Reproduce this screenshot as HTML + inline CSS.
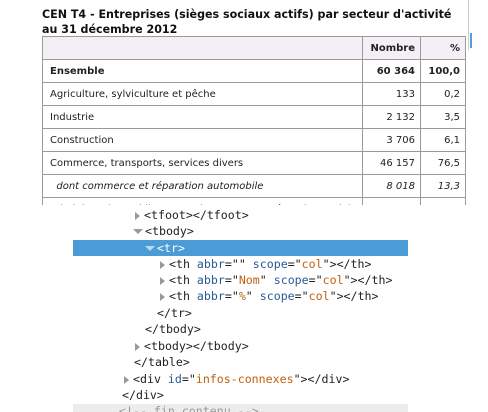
<!DOCTYPE html>
<html><head><meta charset="utf-8"><style>
*{margin:0;padding:0;box-sizing:border-box}
body{width:488px;height:412px;background:#fff;position:relative;overflow:hidden;font-family:"DejaVu Sans","Liberation Sans",sans-serif}
.title{position:absolute;left:42px;top:7px;font-size:11.1px;font-weight:bold;color:#111;line-height:15px;white-space:nowrap}
.clip{position:absolute;left:0;top:0;width:488px;height:205px;overflow:hidden}
table{position:absolute;left:42px;top:36px;width:423px;border-collapse:collapse;table-layout:fixed;font-size:10px;color:#222}
td,th{border:1px solid #9a9a9a;height:23px;padding:0 5px 0 7px;white-space:nowrap;overflow:hidden}
thead th{background:#f4eff6;font-weight:bold;text-align:right}
td.n{text-align:right}
.b td{font-weight:bold}
.i td{font-style:italic}
.vline{position:absolute;left:468px;top:0;width:1px;height:50px;background:#ccc}
.blue{position:absolute;left:470px;top:33px;width:2px;height:15px;background:#5b9bd5}
.dev{position:absolute;left:73px;top:205px;width:335px;height:207px;background:#fff;font-family:"DejaVu Sans Mono","Liberation Mono",monospace;font-size:11.6px;color:#222}
.l{position:absolute;left:0;width:335px;height:16px;line-height:16px;white-space:pre}
.hl{background:#4a9bd6;color:#fff}
.a{color:#2a5a96}.v{color:#c0600e}
.tri{display:inline-block;width:0;height:0;border-top:4px solid transparent;border-bottom:4px solid transparent;border-left:5px solid #999;margin-right:4px;vertical-align:-1px}
.dn{display:inline-block;width:0;height:0;border-left:5px solid transparent;border-right:5px solid transparent;border-top:5px solid #999;margin-right:2px;vertical-align:1px}
.hl .dn{border-top-color:#bcd8ef}
.cm{position:absolute;left:0;top:199px;width:335px;height:8px;background:#ececec;color:#999;font-size:11.6px;line-height:14px;padding-left:46px;overflow:hidden}
</style></head><body>
<div class="vline"></div><div class="blue"></div>
<div class="title">CEN T4 - Entreprises (sièges sociaux actifs) par secteur d'activité<br>au 31 décembre 2012</div>
<div class="clip">
<table>
<colgroup><col style="width:320px"><col style="width:58px"><col style="width:45px"></colgroup>
<thead><tr><th></th><th>Nombre</th><th>%</th></tr></thead>
<tr class="b"><td>Ensemble</td><td class="n">60 364</td><td class="n">100,0</td></tr>
<tr><td>Agriculture, sylviculture et pêche</td><td class="n">133</td><td class="n">0,2</td></tr>
<tr><td>Industrie</td><td class="n">2 132</td><td class="n">3,5</td></tr>
<tr><td>Construction</td><td class="n">3 706</td><td class="n">6,1</td></tr>
<tr><td>Commerce, transports, services divers</td><td class="n">46 157</td><td class="n">76,5</td></tr>
<tr class="i"><td>&nbsp;&nbsp;dont commerce et réparation automobile</td><td class="n">8 018</td><td class="n">13,3</td></tr>
<tr><td>Administration publique, enseignement, santé, action sociale</td><td class="n">9 236</td><td class="n">15,3</td></tr>
</table>
</div>
<div class="dev">
<div class="l" style="top:2px;padding-left:62px"><span class="tri"></span>&lt;tfoot&gt;&lt;/tfoot&gt;</div>
<div class="l" style="top:18px;padding-left:60px"><span class="dn"></span>&lt;tbody&gt;</div>
<div class="l hl" style="top:35px;padding-left:72px"><span class="dn"></span>&lt;tr&gt;</div>
<div class="l" style="top:51px;padding-left:87px"><span class="tri"></span>&lt;th <span class="a">abbr</span>="<span class="v"></span>" <span class="a">scope</span>="<span class="v">col</span>"&gt;&lt;/th&gt;</div>
<div class="l" style="top:67px;padding-left:87px"><span class="tri"></span>&lt;th <span class="a">abbr</span>="<span class="v">Nom</span>" <span class="a">scope</span>="<span class="v">col</span>"&gt;&lt;/th&gt;</div>
<div class="l" style="top:83px;padding-left:87px"><span class="tri"></span>&lt;th <span class="a">abbr</span>="<span class="v">%</span>" <span class="a">scope</span>="<span class="v">col</span>"&gt;&lt;/th&gt;</div>
<div class="l" style="top:100px;padding-left:84px">&lt;/tr&gt;</div>
<div class="l" style="top:116px;padding-left:72px">&lt;/tbody&gt;</div>
<div class="l" style="top:133px;padding-left:62px"><span class="tri"></span>&lt;tbody&gt;&lt;/tbody&gt;</div>
<div class="l" style="top:149px;padding-left:61px">&lt;/table&gt;</div>
<div class="l" style="top:166px;padding-left:51px"><span class="tri"></span>&lt;div <span class="a">id</span>="<span class="v">infos-connexes</span>"&gt;&lt;/div&gt;</div>
<div class="l" style="top:182px;padding-left:49px">&lt;/div&gt;</div>
<div class="cm">&lt;!-- fin contenu --&gt;</div>
</div>
</body></html>
